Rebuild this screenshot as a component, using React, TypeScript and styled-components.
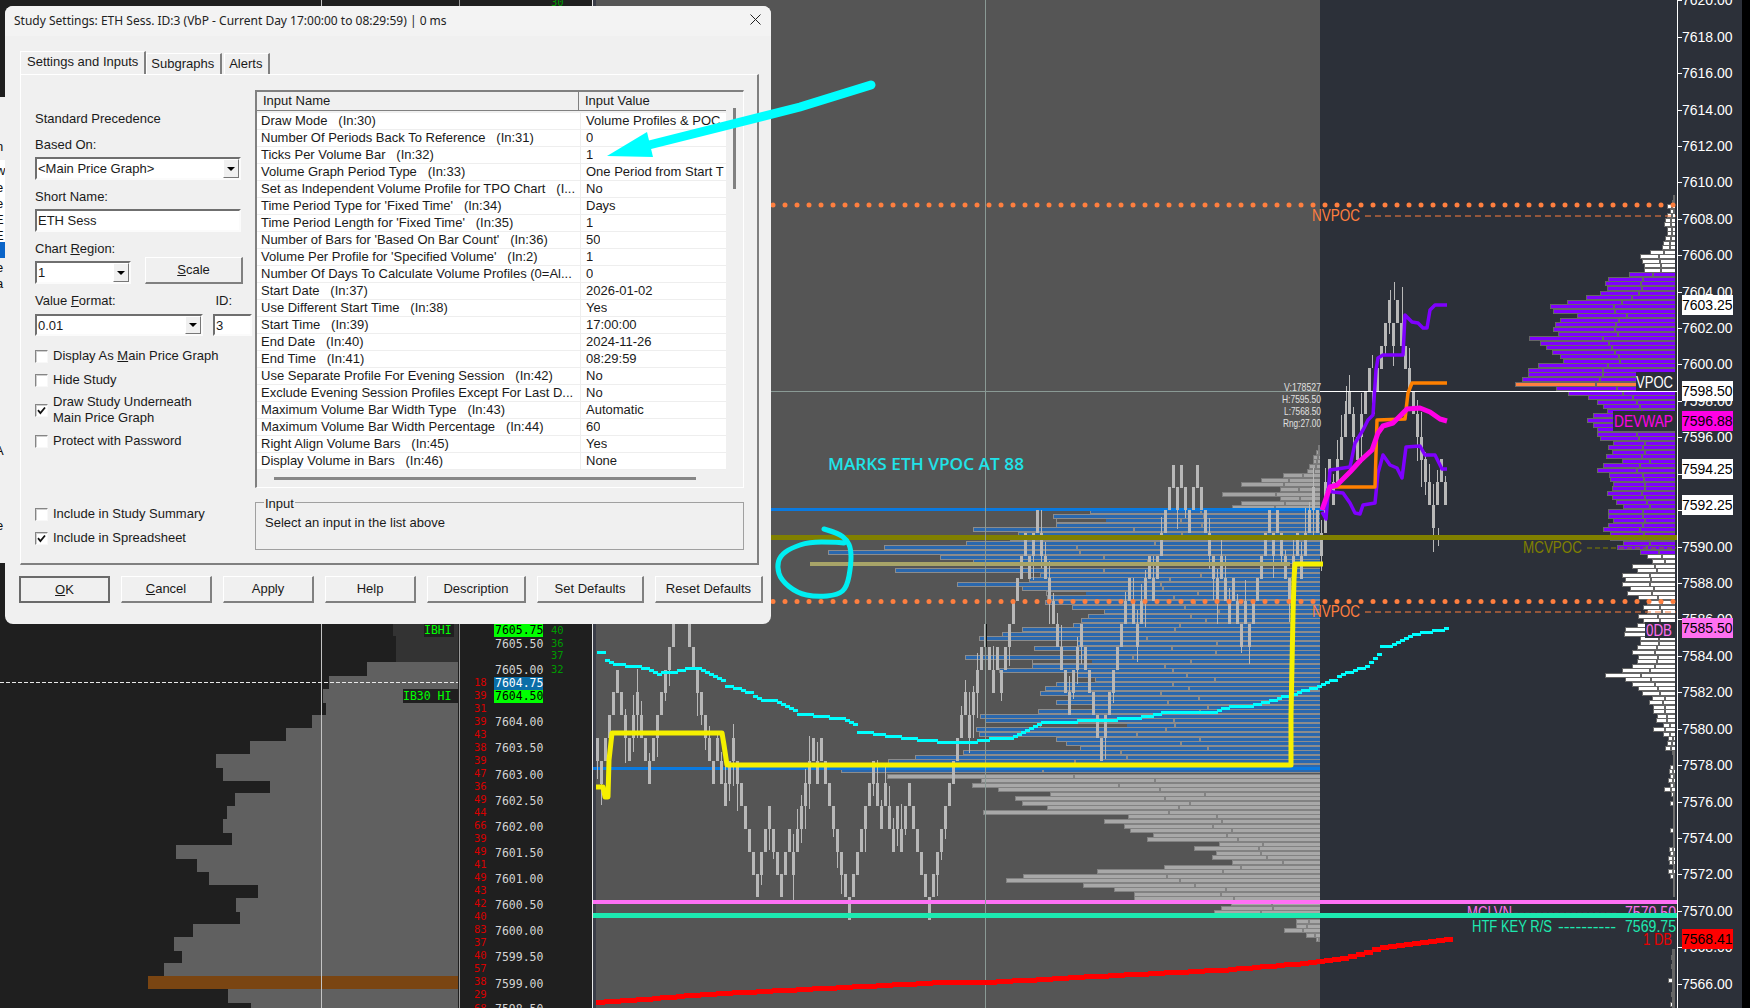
import React from "react";
import styled, { createGlobalStyle } from "styled-components";

const Global = createGlobalStyle`
  html, body { margin: 0; padding: 0; background: #000; overflow: hidden; }
  #root { width: 1750px; height: 1008px; }
`;

const UI = `"Liberation Sans", Arial, sans-serif`;
const MONO = `"DejaVu Sans Mono", "Liberation Mono", monospace`;

/* ---------- page ---------- */
const Page = styled.div`
  position: relative;
  display: flex;
  width: 1750px;
  height: 1008px;
  background: #000;
  overflow: hidden;
`;
const LadderSvg = styled.svg`
  display: block;
  flex: 0 0 592px;
  height: 1008px;
  background: #1f1f1f;
`;
const ChartSvg = styled.svg`
  display: block;
  flex: 0 0 1085px;
  height: 1008px;
  background: #555;
`;
const AxisSvg = styled.svg`
  display: block;
  flex: 0 0 65px;
  height: 1008px;
  background: #2c3039;
`;
const AnnotationLayer = styled.svg`
  position: absolute;
  left: 0;
  top: 0;
  width: 1750px;
  height: 1008px;
  pointer-events: none;
`;

/* ---------- svg text ---------- */
const PriceText = styled.text<{ $color?: string }>`
  font: 11.5px ${MONO};
  fill: ${(p) => p.$color || "#d4d4d4"};
`;
const CountText = styled.text<{ $color: string }>`
  font: 10.5px ${MONO};
  fill: ${(p) => p.$color};
`;
const TagText = styled.text`
  font: 11.5px ${MONO};
  fill: #00ff00;
`;
const AxisText = styled.text<{ $color?: string }>`
  font: 14px ${UI};
  fill: ${(p) => p.$color || "#fff"};
`;
const ChartLabel = styled.text<{ $color: string }>`
  font: 16px ${UI};
  fill: ${(p) => p.$color};
`;
const StatText = styled.text`
  font: 11px ${UI};
  fill: #e0e0e0;
`;
const NoteText = styled.text`
  font: 600 17px "Open Sans", ${UI};
  fill: #1fe3e8;
`;
const SliverText = styled.text`
  font: 13px ${UI};
  fill: #111;
`;

/* ---------- dialog ---------- */
const Dialog = styled.div`
  position: absolute;
  left: 5px;
  top: 6px;
  width: 766px;
  height: 618px;
  background: #f0f0f0;
  border-radius: 8px;
  font: 13px/16px ${UI};
  color: #1a1a1a;
  overflow: hidden;
`;
const TitleBar = styled.div`
  box-sizing: border-box;
  display: flex;
  align-items: center;
  justify-content: space-between;
  height: 30px;
  padding: 0 9px 2px;
  background: #f3f3f3;
`;
const TitleText = styled.div`
  font: 12px "Noto Sans", ${UI};
  color: #222;
  white-space: nowrap;
`;
const DialogBody = styled.div`
  padding: 15px 0 0 15px;
`;
const TabStrip = styled.div`
  display: flex;
  align-items: flex-end;
  height: 23px;
`;
const Tab = styled.div<{ $active?: boolean }>`
  height: ${(p) => (p.$active ? 23 : 21)}px;
  box-sizing: border-box;
  padding: ${(p) => (p.$active ? "2px 6px 0 6px" : "2px 6px 0 4px")};
  margin-right: ${(p) => (p.$active ? 0 : 2)}px;
  border-top: 1px solid #fff;
  border-left: 1px solid #fff;
  border-right: 2px solid #808080;
  background: #f0f0f0;
  white-space: nowrap;
`;
const TabPanel = styled.div`
  display: flex;
  box-sizing: border-box;
  width: 739px;
  height: 491px;
  padding: 15px 0 0 14px;
  border-top: 1px solid #fff;
  border-left: 1px solid #fff;
  border-right: 2px solid #808080;
  border-bottom: 2px solid #808080;
`;
const FormColumn = styled.div`
  flex: 0 0 220px;
  padding-top: 21px;
`;
const FormLabel = styled.div<{ $top: number }>`
  margin-top: ${(p) => p.$top}px;
  height: 16px;
`;
const LabelRow = styled.div`
  display: flex;
  justify-content: space-between;
  width: 197px;
  margin-top: 9px;
  height: 16px;
`;
const FieldRow = styled.div<{ $top: number; $align?: string }>`
  display: flex;
  align-items: ${(p) => p.$align || "stretch"};
  margin-top: ${(p) => p.$top}px;
`;
const Sunken = styled.div<{ $w: number; $h: number; $ml?: number }>`
  box-sizing: border-box;
  display: flex;
  justify-content: space-between;
  width: ${(p) => p.$w}px;
  height: ${(p) => p.$h}px;
  margin-left: ${(p) => p.$ml || 0}px;
  padding-left: 1px;
  line-height: 19px;
  background: #fff;
  border: 2px solid;
  border-color: #6f6f6f #fbfbfb #fbfbfb #6f6f6f;
  overflow: hidden;
  white-space: nowrap;
`;
const ComboButton = styled.div`
  flex: 0 0 16px;
  display: flex;
  align-items: center;
  justify-content: center;
  background: #f0f0f0;
  border: 1px solid;
  border-color: #fff #777 #777 #fff;
  box-sizing: border-box;
  &::after {
    content: "";
    border-left: 4px solid transparent;
    border-right: 4px solid transparent;
    border-top: 4px solid #000;
  }
`;
const RaisedButton = styled.div<{ $w: number; $default?: boolean; $ml?: number }>`
  box-sizing: border-box;
  flex: 0 0 ${(p) => p.$w}px;
  width: ${(p) => p.$w}px;
  height: 27px;
  margin-left: ${(p) => p.$ml || 0}px;
  display: flex;
  align-items: center;
  justify-content: center;
  background: #f0f0f0;
  border-style: solid;
  border-width: 1px 2px 2px 1px;
  border-color: ${(p) => (p.$default ? "#6a6a6a" : "#fff #808080 #808080 #fff")};
  ${(p) => (p.$default ? "border-width: 2px;" : "")}
`;
const CheckRow = styled.div<{ $top: number }>`
  display: flex;
  align-items: center;
  gap: 5px;
  margin-top: ${(p) => p.$top}px;
`;
const CheckBox = styled.div`
  position: relative;
  box-sizing: border-box;
  flex: 0 0 13px;
  width: 13px;
  height: 13px;
  background: #fff;
  border: 1px solid;
  border-color: #858585 #f8f8f8 #f8f8f8 #858585;
  box-shadow: inset 1px 1px 0 #cfcfcf;
`;
const CheckLabel = styled.div`
  white-space: nowrap;
`;
const CheckMark = styled.svg`
  display: block;
  width: 11px;
  height: 11px;
`;
const InputsColumn = styled.div`
  flex: 0 0 489px;
`;
const InputList = styled.div`
  position: relative;
  box-sizing: border-box;
  width: 489px;
  height: 398px;
  border-top: 2px solid #808080;
  border-left: 2px solid #808080;
  border-right: 1px solid #fff;
  border-bottom: 1px solid #fff;
`;
const ListHeader = styled.div`
  display: flex;
  width: 469px;
  height: 18px;
  border-bottom: 1px solid #808080;
  margin-bottom: 2px;
  line-height: 17px;
`;
const HeaderCell = styled.div<{ $w: number; $last?: boolean }>`
  box-sizing: border-box;
  width: ${(p) => p.$w}px;
  padding-left: 6px;
  border-right: ${(p) => (p.$last ? "0" : "1px solid #808080")};
`;
const ListRow = styled.div`
  display: flex;
  width: 469px;
  height: 17px;
  box-sizing: border-box;
  background: #fff;
  border-bottom: 1px solid #eeeeee;
  line-height: 16px;
  white-space: pre;
  overflow: hidden;
`;
const NameCell = styled.div`
  box-sizing: border-box;
  flex: 0 0 324px;
  padding-left: 4px;
  border-right: 1px solid #eeeeee;
  overflow: hidden;
`;
const ValueCell = styled.div`
  padding-left: 5px;
  overflow: hidden;
`;
const VScrollThumb = styled.div`
  position: absolute;
  left: 476px;
  top: 16px;
  width: 3px;
  height: 81px;
  background: #808080;
`;
const HScrollThumb = styled.div`
  position: absolute;
  left: 17px;
  bottom: 7px;
  width: 422px;
  height: 3px;
  background: #868686;
`;
const GroupBox = styled.div`
  position: relative;
  box-sizing: border-box;
  width: 489px;
  height: 48px;
  margin-top: 14px;
  padding: 12px 9px 0;
  border: 1px solid #a0a0a0;
`;
const GroupLegend = styled.div`
  position: absolute;
  left: 8px;
  top: -7px;
  padding: 0 1px;
  background: #f0f0f0;
`;
const ButtonRow = styled.div`
  display: flex;
  gap: 11px;
  margin-top: 11px;
  margin-left: -1px;
`;

/* ---------- close glyph ---------- */
const CloseGlyph = styled.svg`
  display: block;
  width: 11px;
  height: 11px;
  margin: 0 1px 2px 0;
`;

/* ---------- data ---------- */
const ROWS: [string, string][] = [
  ["Draw Mode   (In:30)", "Volume Profiles & POC"],
  ["Number Of Periods Back To Reference   (In:31)", "0"],
  ["Ticks Per Volume Bar   (In:32)", "1"],
  ["Volume Graph Period Type   (In:33)", "One Period from Start T"],
  ["Set as Independent Volume Profile for TPO Chart   (I...", "No"],
  ["Time Period Type for 'Fixed Time'   (In:34)", "Days"],
  ["Time Period Length for 'Fixed Time'   (In:35)", "1"],
  ["Number of Bars for 'Based On Bar Count'   (In:36)", "50"],
  ["Volume Per Profile for 'Specified Volume'   (In:2)", "1"],
  ["Number Of Days To Calculate Volume Profiles (0=Al...", "0"],
  ["Start Date   (In:37)", "2026-01-02"],
  ["Use Different Start Time   (In:38)", "Yes"],
  ["Start Time   (In:39)", "17:00:00"],
  ["End Date   (In:40)", "2024-11-26"],
  ["End Time   (In:41)", "08:29:59"],
  ["Use Separate Profile For Evening Session   (In:42)", "No"],
  ["Exclude Evening Session Profiles Except For Last D...", "No"],
  ["Maximum Volume Bar Width Type   (In:43)", "Automatic"],
  ["Maximum Volume Bar Width Percentage   (In:44)", "60"],
  ["Right Align Volume Bars   (In:45)", "Yes"],
  ["Display Volume in Bars   (In:46)", "None"],
];

const LADDER_BARS: [number, number][] = [
  [662, 367], [676, 329], [689, 323], [702, 326], [715, 312], [728, 286], [741, 250], [754, 216],
  [767, 223], [780, 270], [793, 235], [806, 227], [819, 223], [832, 232], [845, 176], [858, 197],
  [871, 209], [885, 258], [898, 236], [911, 240], [924, 193], [937, 174], [950, 182], [963, 164],
  [989, 228], [1002, 251],
];
const LADDER_PRICES: [string, number, string?, string?][] = [
  ["7605.75", 630, "#00ff00", "#000"], ["7605.50", 644], ["7605.00", 670],
  ["7604.75", 683, "#0a6ea8", "#fff"], ["7604.50", 696, "#00ff00", "#000"],
  ["7604.00", 722], ["7603.50", 748], ["7603.00", 775], ["7602.50", 801], ["7602.00", 827],
  ["7601.50", 853], ["7601.00", 879], ["7600.50", 905], ["7600.00", 931], ["7599.50", 957],
  ["7599.00", 984], ["7598.50", 1009],
];
const LADDER_RED = ["18","39","31","39","43","38","39","47","36","49","44","66","39","49","41","49","43","42","40","83","37","40","57","38","29","68"];
const LADDER_GREEN: [string, number][] = [["30", 2], ["40", 630], ["36", 643], ["37", 655], ["32", 669]];

const BLUE_LEFT = [1090,1053,1056,1056,973,1018,1010,966,884,828,940,973,1290,895,1040,1029,957,1022,1046,1047,1045,1072,1104,1088,1081,1073,1022,1002,979,1077,1034,1081,965,1032,1032,999,1077,1095,1056,1045,1040,1070,1056,1093,1038,980,985,1040,976,979,1056,1066,1080,963,915,888,888,841];
const BLUE_GHOST: Record<number, number> = { 2: 1106, 18: 1086, 33: 1092, 47: 1127 };
const UPPER_GRAY: [number, number][] = [[505,1232],[501,1241],[496,1280],[492,1222],[487,1280],[482,1241],[478,1261],[473,1283],[469,1307],[464,1309],[459,1313],[455,1313],[450,1316],[445,1318]];
const LOWER_GRAY: [number, number][] = [[774,887],[778,981],[783,972],[787,998],[792,1050],[796,1015],[801,1022],[805,1047],[810,983],[814,1128],[819,1104],[824,1124],[828,1130],[833,1153],[837,1147],[842,1219],[846,1194],[851,1216],[855,1212],[860,1232],[865,1164],[869,1097],[874,1023],[878,1006],[883,1083],[887,1114],[892,1134],[896,1134],[901,1231],[906,1221],[910,1214],[919,1296],[924,1296],[928,1284],[933,1306],[937,1316]];

const RIGHT_TOP = [1673,1672,1667,1670,1667,1665,1664,1667,1667,1665,1663,1662,1650,1640,1642,1644,1644,
  1629,1608,1605,1607,1600,1586,1567,1550,1553,1577,1560,1555,1553,1558,1529,1540,1546,1552,1560,1563,1538,1528,1528,1522,1515,1556,1568,1588,1597,1603,1607,1593,1587,1593,1597,1597,1600,1613,1608,1612,1606,1622,1603,1597,1609,1610,1613,1612,1607,1612,1616,1623,1608,1608,1613,1608,1603,1610,1610,1623,1617,1640,
  1647,1652,1632,1637,1622,1625,1622,1630,1627,1638,1647,1643,1647,1638,1643,1637,1625,1624,1640,1640,1637,1632,1638,1637,1632,1622,1605,1625,
  1632,1638,1642,1652,1649,1653,1653,1657,1656,1663,1653,1663,1668,1667,1665,1672];
const RIGHT_LOW: Record<number, number> = {3:1670,4:1669,5:1670,6:1668,7:1670,8:1664,9:1671,11:1670,17:1670,21:1669,22:1670,23:1668,24:1669,26:1668,27:1670};
const RIGHT_TAIL: [number, number][] = [[955,1671],[964,1671],[978,1668],[992,1671],[1002,1670]];

const CANDLES_A = [5,6,5,4,3,2,3,4,5,4,3,4,5,6,5,4,3,2,1,0,-1,-1,-1,0,1,2,3,4,5,6,5,6,7,6,5,6,7,8,9,10,11,10,9,8,9,10,11,10,9,10,9,8,7,6,5,6,5,6,7,8,9,10,11,12,11,10,9,8,7,6,7,8,7,8,9,8,9,8,7,8,9,10,11,12,11,10,9,8,7,6,5,4,3,4,3,2,1,0,1,2,1,
  2,1,0,-1,-2,-3,-4,-3,-4,-5,-4,-3,-2,-1,0,1,2,3,2,1,0,1,2,3,4,5,4,3,2,1,0,-1,-2,-1,0,-1,-2,-3,-2,-3,-4,-5,-6,-7,-6,-7,-6,-5,-6,-7,-6,-5,-4,-3,-2,-3,-2,-1,-2,-1,0,-1,0,-1,-2,-3,-4,-5,-4,-5,-4,-3,-2,-3,-4,-3,-4,-5,-6,-5,-4,-5];
const CANDLES_B = [8,7,8,7,6,5,4,5,6,5,4,3,4,3,2,1,0,1,0,1,2,3,4,5,6,7,8,9,8,7,8];
const TALL_WICKS: [number, number, number][] = [[1394, 282, 300], [1390, 290, 300], [1402, 287, 323], [1372, 355, 368], [1438, 528, 546], [1434, 505, 520], [1346, 386, 415]];

type Pt = [number, number];
const CYAN_A: Pt[] = [[597,652],[604,652],[605,659],[610,663],[623,665],[640,667],[650,670],[657,673],[673,672],[683,669],[698,668],[703,672],[723,680]];
const CYAN_B: Pt[] = [[725,686],[733,687],[750,693],[760,700],[772,700],[790,709],[797,713],[820,716],[843,719],[855,726]];
const CYAN_C: Pt[] = [[857,732],[870,733],[900,737],[917,739],[943,742],[967,742],[987,739],[1010,737],[1023,732],[1037,723],[1070,722],[1090,719],[1115,719],[1149,716],[1157,713],[1215,711],[1229,706],[1252,705],[1288,695],[1320,685],[1333,679],[1337,675],[1360,668],[1370,662],[1378,652]];
const CYAN_D: Pt[] = [[1380,645],[1390,645],[1403,638],[1413,634],[1437,630],[1447,628]];
const RED_PTS: Pt[] = [[596,1002],[640,999],[700,994],[760,991],[820,988],[880,985],[940,982],[980,982],[1020,980],[1060,978],[1090,976],[1150,973],[1230,969],[1300,963],[1320,960],[1345,957],[1360,953],[1380,947],[1420,942],[1447,939]];
const YELLOW = "596,787 603,787 605,797 608,797 609,760 612,733 722,733 724,745 727,765 1291,765 1291,715 1292,665 1293,614 1294,579 1295,564 1323,564";
const MAGENTA = "1322,510 1330,487 1337,485 1350,472 1360,461 1372,450 1378,433 1383,426 1393,423 1407,409 1420,408 1430,412 1440,419 1447,421";
const PURPLE_UP = "1322,512 1326,519 1330,470 1337,469 1350,467 1355,443 1363,430 1368,420 1373,415 1376,370 1378,358 1383,355 1403,355 1405,315 1412,322 1418,323 1423,328 1427,328 1430,310 1435,305 1447,305";
const PURPLE_LOW = "1326,490 1333,492 1343,493 1350,503 1355,513 1360,514 1363,505 1375,503 1378,473 1383,455 1390,465 1397,468 1402,478 1406,447 1420,446 1425,455 1435,455 1442,469 1447,469";
const ORANGE = "1330,487 1375,487 1377,420 1405,419 1408,393 1412,383 1447,383";
const CIRCLE: Pt[] = [[824,529],[838,533],[847,540],[851,549],[851,565],[847,587],[838,595],[816,597],[797,593],[781,580],[777,567],[780,556],[791,548],[809,542],[834,542],[844,543]];

const AXIS_LABELS = Array.from({ length: 28 }, (_, i) => 7620 - i * 2);
const axisY = (p: number) => 36.7 + (7618 - p) * 18.21;
const AXIS_BOXES: [string, number, string][] = [
  ["7603.25", 295, "#fff"], ["7598.50", 381, "#fff"], ["7596.88", 411, "#ff00e6"],
  ["7594.25", 459, "#fff"], ["7592.25", 495, "#fff"], ["7585.50", 618, "#ff70f0"],
  ["7568.41", 929, "#ff0000"],
];

const hash = (i: number) => Math.floor(((i * 2654435761) % 4294967296) / 65536);

/* turns a polyline into the stair-stepped run the platform draws */
function stepRuns(pts: Pt[], stepX: number, stepY: number) {
  const runs: { x: number; y: number; w: number }[] = [];
  for (let x = pts[0][0]; x < pts[pts.length - 1][0]; x += stepX) {
    const j = pts.findIndex((p, k) => k > 0 && x <= p[0]);
    const [a, b] = [pts[j - 1] || pts[0], pts[j] || pts[0]];
    const y = a[1] + ((b[1] - a[1]) * (x - a[0])) / Math.max(b[0] - a[0], 1);
    const q = Math.round(y / stepY) * stepY;
    const last = runs[runs.length - 1];
    if (last && last.y === q) last.w += stepX;
    else runs.push({ x, y: q, w: stepX });
  }
  return runs;
}
/* a curve through hand-drawn points */
function smoothPath(pts: Pt[]) {
  let d = `M${pts[0][0]} ${pts[0][1]}`;
  for (let i = 1; i < pts.length - 1; i++) {
    const mx = (pts[i][0] + pts[i + 1][0]) / 2;
    const my = (pts[i][1] + pts[i + 1][1]) / 2;
    d += ` Q${pts[i][0]} ${pts[i][1]} ${mx} ${my}`;
  }
  const e = pts[pts.length - 1];
  return `${d} L${e[0]} ${e[1]}`;
}

/* ---------- chart pieces ---------- */
function ProfileRow({ y, x0, right, outline, fill, f, ghost }: { y: number; x0: number; right: number; outline: string; fill: string; f: number; ghost?: number }) {
  const top = Math.round(y);
  const w = right - x0;
  const split = Math.round(x0 + w * f);
  return (
    <g>
      <rect x={x0} y={top} width={w} height={5} fill={outline} />
      {w > 3 && <rect x={x0 + 1} y={top + 1} width={Math.max(split - x0 - 1, 0)} height={3} fill={fill} />}
      {w > 3 && <rect x={split + 2} y={top + 1} width={Math.max(right - split - 2, 0)} height={3} fill={fill} />}
      {ghost && <rect x={x0 + 1} y={top + 1} width={ghost - x0 - 1} height={3} fill="#555" />}
    </g>
  );
}
const splitFor = (i: number) => 0.42 + (hash(i + 3) % 16) / 100;

function Candle({ x, top, h, i }: { x: number; top: number; h: number; i: number }) {
  const v = hash(i + 11);
  const up = v % 3 === 0 ? 6 + (v >> 3) % 20 : 0;
  const down = (v >> 5) % 3 === 0 ? 6 + (v >> 7) % 22 : 0;
  return (
    <g fill="#b8b8b8">
      <rect x={x + 1} y={top - up} width={1} height={h + up + down} />
      <rect x={x} y={top} width={3} height={h} />
    </g>
  );
}
const Line = ({ points, color, w }: { points: string; color: string; w: number }) => (
  <polyline points={points} fill="none" stroke={color} strokeWidth={w} strokeLinejoin="round" strokeLinecap="butt" />
);
const StepLine = ({ pts, color, h, sx = 4, sy = 1 }: { pts: Pt[]; color: string; h: number; sx?: number; sy?: number }) => (
  <g fill={color}>
    {stepRuns(pts, sx, sy).map((r) => (
      <rect key={r.x} x={r.x} y={r.y - h / 2} width={r.w + 1} height={h} />
    ))}
  </g>
);

function Ladder() {
  return (
    <LadderSvg viewBox="0 0 592 1008">
      <rect x={393} y={624} width={65} height={12} fill="#333" />
      <rect x={396} y={636} width={62} height={26} fill="#333" />
      {LADDER_BARS.map(([y, x]) => (
        <rect key={y} x={x} y={y} width={458 - x} height={14} fill="#606060" />
      ))}
      <rect x={148} y={976} width={310} height={13} fill="#7a4512" />
      <rect x={321} y={0} width={1} height={1008} fill="#c4c4c4" />
      <rect x={459} y={0} width={1} height={1008} fill="#9a9a9a" />
      <line x1={0} x2={458} y1={682.5} y2={682.5} stroke="#e8e8e8" strokeWidth={1} strokeDasharray="4 2" />
      <rect x={0} y={97} width={5} height={466} fill="#f0f0f0" />
      <rect x={0} y={160} width={5} height={90} fill="#fff" />
      <rect x={0} y={242} width={5} height={16} fill="#0a64c8" />
      <SliverText x={-4} y={151}>n</SliverText>
      <SliverText x={-4} y={175}>w</SliverText>
      <SliverText x={-4} y={192}>e</SliverText>
      <SliverText x={-4} y={208}>e</SliverText>
      <SliverText x={-5} y={224}>E</SliverText>
      <SliverText x={-5} y={240}>E</SliverText>
      <SliverText x={-4} y={272}>e</SliverText>
      <SliverText x={-4} y={288}>a</SliverText>
      <SliverText x={-5} y={455}>A</SliverText>
      <SliverText x={-4} y={530}>e</SliverText>
      <rect x={424} y={623} width={30} height={14} fill="#1f1f1f" />
      <TagText x={424} y={634}>IBHI</TagText>
      <rect x={403} y={689} width={55} height={14} fill="#1f1f1f" />
      <TagText x={403} y={700}>IB30 HI</TagText>
      {LADDER_PRICES.map(([t, y, bg, fg]) => (
        <g key={t}>
          {bg && <rect x={494} y={y - 6} width={49} height={13} fill={bg} />}
          <PriceText x={495} y={y + 4} $color={fg}>{t}</PriceText>
        </g>
      ))}
      {LADDER_RED.map((t, i) => (
        <CountText key={i} x={474} y={686 + i * 13.02} $color="#d80000">{t}</CountText>
      ))}
      {LADDER_GREEN.map(([t, y]) => (
        <CountText key={y} x={551} y={y + 4} $color="#009a00">{t}</CountText>
      ))}
    </LadderSvg>
  );
}

function MainChart() {
  const dots = Array.from({ length: 91 }, (_, i) => 1673 - 12 * i);
  return (
    <ChartSvg viewBox="592 0 1085 1008">
      <rect x={592} y={0} width={1} height={1008} fill="#e8e8e8" />
      <rect x={593} y={0} width={3} height={1008} fill="#3a3d48" />
      <rect x={1320} y={0} width={357} height={1008} fill="#2c3039" />
      <g shapeRendering="crispEdges">
        {UPPER_GRAY.map(([y, x], i) => (
          <ProfileRow key={y} y={y} x0={x} right={1320} outline="#7b7b7b" fill="#a4a4a4" f={splitFor(i)} />
        ))}
        {BLUE_LEFT.map((x, i) =>
          i === 12 ? null : (
            <ProfileRow key={i} y={509 + i * 4.55} x0={x} right={1320} outline="#8c8c8c" fill="#2a68ae" f={splitFor(i + 30)} ghost={BLUE_GHOST[i]} />
          )
        )}
        {LOWER_GRAY.map(([y, x], i) => (
          <ProfileRow key={y} y={y} x0={x} right={1320} outline="#828282" fill="#a8a8a8" f={splitFor(i + 70)} />
        ))}
        {RIGHT_TOP.map((x, i) => {
          const purple = i >= 17 && i <= 78;
          return (
            <ProfileRow key={i} y={195 + i * 4.55} x0={x} right={1675} outline="#666" fill={i === 41 ? "#ff8040" : purple ? "#7f00ff" : "#fff"} f={0.5} />
          );
        })}
        {Array.from({ length: 32 }, (_, i) => (
          <ProfileRow key={i} y={751 + i * 4.55} x0={RIGHT_LOW[i] ?? 1673} right={1675} outline="#6e6e6e" fill="#fff" f={0.5} />
        ))}
        {RIGHT_TAIL.map(([y, x]) => (
          <ProfileRow key={y} y={y} x0={x} right={1675} outline="#666" fill="#fff" f={0.5} />
        ))}
        <rect x={1672} y={949} width={3} height={59} fill="#666" />
        <rect x={771} y={508} width={549} height={3} fill="#0a7ae0" />
        <rect x={593} y={767} width={727} height={3} fill="#0a7ae0" />
        <rect x={1320} y={509} width={4} height={2} fill="#0a7ae0" />
        {CANDLES_A.map((k, i) => (
          <Candle key={i} i={i} x={596 + i * 4} top={Math.round(624 + k * 22.77)} h={23} />
        ))}
        {CANDLES_B.map((m, i) => (
          <Candle key={i} i={i + 300} x={1324 + i * 4} top={Math.round(300 + m * 22.75)} h={23} />
        ))}
        {TALL_WICKS.map(([x, a, b]) => (
          <rect key={x} x={x} y={a} width={1} height={b - a} fill="#b8b8b8" />
        ))}
        <rect x={986} y={624} width={1} height={23} fill="#111" />
        <rect x={810} y={562} width={480} height={4} fill="#a8a468" />
        <rect x={593} y={535} width={1084} height={5} fill="#808000" />
        <rect x={593} y={900} width={1084} height={4} fill="#ff70f5" />
        <rect x={593} y={913} width={1084} height={5} fill="#1de9b0" />
        <rect x={985} y={0} width={1} height={1008} fill="#8a9a95" />
        <rect x={593} y={391} width={727} height={1} fill="#8a9a95" />
        <rect x={1320} y={391} width={357} height={1} fill="#fff" />
      </g>
      {dots.map((x) => (
        <g key={x} fill="#ff7f3f">
          <circle cx={x} cy={205} r={2.5} />
          <circle cx={x} cy={601.5} r={2.5} />
        </g>
      ))}
      <line x1={1365} x2={1676} y1={216} y2={216} stroke="#ff7f3f" strokeWidth={1.2} strokeDasharray="6 4" />
      <line x1={1365} x2={1676} y1={612} y2={612} stroke="#ff7f3f" strokeWidth={1.2} strokeDasharray="6 4" />
      <line x1={1587} x2={1676} y1={548} y2={548} stroke="#808000" strokeWidth={1.2} strokeDasharray="5 3" />
      <g shapeRendering="crispEdges">
        <StepLine pts={RED_PTS} color="#ff0000" h={5} sx={8} sy={1} />
        <StepLine pts={CYAN_A} color="#00ffff" h={3} sx={4} sy={2} />
        <StepLine pts={CYAN_B} color="#00ffff" h={3} sx={4} sy={2} />
        <StepLine pts={CYAN_C} color="#00ffff" h={3} sx={4} sy={2} />
        <StepLine pts={CYAN_D} color="#00ffff" h={3} sx={4} sy={2} />
      </g>
      <Line points={YELLOW} color="#f5f000" w={5} />
      <Line points={PURPLE_UP} color="#7f00ff" w={3.5} />
      <Line points={PURPLE_LOW} color="#7f00ff" w={3.5} />
      <Line points={ORANGE} color="#ff8000" w={3.5} />
      <Line points={MAGENTA} color="#ff00e6" w={5} />
      <ChartLabel x={1312} y={221} $color="#ff7f3f" textLength={48} lengthAdjust="spacingAndGlyphs">NVPOC</ChartLabel>
      <ChartLabel x={1312} y={617} $color="#ff7f3f" textLength={48} lengthAdjust="spacingAndGlyphs">NVPOC</ChartLabel>
      <ChartLabel x={1523} y={553} $color="#808000" textLength={59} lengthAdjust="spacingAndGlyphs">MCVPOC</ChartLabel>
      <rect x={1636} y={372} width={40} height={19} fill="#2c3039" />
      <ChartLabel x={1636} y={388} $color="#fff" textLength={37} lengthAdjust="spacingAndGlyphs">VPOC</ChartLabel>
      <rect x={1613} y={411} width={63} height={20} fill="#2c3039" />
      <ChartLabel x={1614} y={427} $color="#ff00e6" textLength={59} lengthAdjust="spacingAndGlyphs">DEVWAP</ChartLabel>
      <rect x={1645} y={622} width={31} height={16} fill="#2c3039" />
      <ChartLabel x={1646} y={636} $color="#ff70f0" textLength={26} lengthAdjust="spacingAndGlyphs">0DB</ChartLabel>
      <ChartLabel x={1467} y={918} $color="#ff70f0" textLength={45} lengthAdjust="spacingAndGlyphs">MCLVN</ChartLabel>
      <ChartLabel x={1513} y={918} $color="#ff70f0" textLength={104} lengthAdjust="spacingAndGlyphs">------------------</ChartLabel>
      <ChartLabel x={1625} y={918} $color="#ff70f0" textLength={51} lengthAdjust="spacingAndGlyphs">7570.50</ChartLabel>
      <rect x={593} y={913} width={1084} height={5} fill="#1de9b0" />
      <ChartLabel x={1472} y={932} $color="#1de9b0" textLength={80} lengthAdjust="spacingAndGlyphs">HTF KEY R/S</ChartLabel>
      <ChartLabel x={1558} y={932} $color="#1de9b0" textLength={58} lengthAdjust="spacingAndGlyphs">----------</ChartLabel>
      <ChartLabel x={1625} y={932} $color="#1de9b0" textLength={51} lengthAdjust="spacingAndGlyphs">7569.75</ChartLabel>
      <ChartLabel x={1643} y={945} $color="#e80000" textLength={29} lengthAdjust="spacingAndGlyphs">1 DB</ChartLabel>
      <StatText x={1284} y={391} textLength={37} lengthAdjust="spacingAndGlyphs">V:178527</StatText>
      <StatText x={1282} y={403} textLength={39} lengthAdjust="spacingAndGlyphs">H:7595.50</StatText>
      <StatText x={1284} y={415} textLength={37} lengthAdjust="spacingAndGlyphs">L:7568.50</StatText>
      <StatText x={1283} y={427} textLength={38} lengthAdjust="spacingAndGlyphs">Rng:27.00</StatText>
      <NoteText x={828} y={470} textLength={196} lengthAdjust="spacingAndGlyphs">MARKS ETH VPOC AT 88</NoteText>
    </ChartSvg>
  );
}

function PriceAxis() {
  return (
    <AxisSvg viewBox="1677 0 65 1008">
      <rect x={1677} y={0} width={1} height={1008} fill="#fff" />
      {AXIS_LABELS.map((p) => {
        const y = axisY(p);
        return (
          <g key={p}>
            <rect x={1678} y={Math.round(y)} width={4} height={1} fill="#fff" />
            <AxisText x={1682} y={y + 5}>{p.toFixed(2)}</AxisText>
          </g>
        );
      })}
      {AXIS_BOXES.map(([t, y, bg]) => (
        <g key={t}>
          <rect x={1682} y={y} width={51} height={20} fill={bg} />
          <AxisText x={1682} y={y + 15} $color="#000">{t}</AxisText>
        </g>
      ))}
    </AxisSvg>
  );
}

const CheckIcon = () => (
  <CheckMark viewBox="0 0 11 11">
    <path d="M2 5.2 L4.4 8 L9 2.5" fill="none" stroke="#111" strokeWidth="1.8" />
  </CheckMark>
);

function Settings() {
  return (
    <Dialog>
      <TitleBar>
        <TitleText>Study Settings: ETH Sess. ID:3 (VbP - Current Day 17:00:00 to 08:29:59) | 0 ms</TitleText>
        <CloseGlyph viewBox="0 0 11 11">
          <path d="M0.5 0.5 L10.5 10.5 M10.5 0.5 L0.5 10.5" stroke="#222" strokeWidth="1" fill="none" />
        </CloseGlyph>
      </TitleBar>
      <DialogBody>
        <TabStrip>
          <Tab $active>Settings and Inputs</Tab>
          <Tab>Subgraphs</Tab>
          <Tab>Alerts</Tab>
        </TabStrip>
        <TabPanel>
          <FormColumn>
            <FormLabel $top={0}>Standard Precedence</FormLabel>
            <FormLabel $top={10}>Based On:</FormLabel>
            <FieldRow $top={4}>
              <Sunken $w={206} $h={23}>&lt;Main Price Graph&gt;<ComboButton /></Sunken>
            </FieldRow>
            <FormLabel $top={9}>Short Name:</FormLabel>
            <FieldRow $top={4}>
              <Sunken $w={206} $h={23}>ETH Sess</Sunken>
            </FieldRow>
            <FormLabel $top={9}>Chart <u>R</u>egion:</FormLabel>
            <FieldRow $top={0} $align="flex-end">
              <Sunken $w={96} $h={23}>1<ComboButton /></Sunken>
              <RaisedButton $w={98} $ml={14}><span><u>S</u>cale</span></RaisedButton>
            </FieldRow>
            <LabelRow><span>Value <u>F</u>ormat:</span><span>ID:</span></LabelRow>
            <FieldRow $top={5}>
              <Sunken $w={168} $h={22}>0.01<ComboButton /></Sunken>
              <Sunken $w={39} $h={22} $ml={10}>3</Sunken>
            </FieldRow>
            <CheckRow $top={12}><CheckBox /><CheckLabel>Display As <u>M</u>ain Price Graph</CheckLabel></CheckRow>
            <CheckRow $top={8}><CheckBox /><CheckLabel>Hide Study</CheckLabel></CheckRow>
            <CheckRow $top={6}><CheckBox><CheckIcon /></CheckBox><CheckLabel>Draw Study Underneath<br />Main Price Graph</CheckLabel></CheckRow>
            <CheckRow $top={7}><CheckBox /><CheckLabel>Protect with Password</CheckLabel></CheckRow>
            <CheckRow $top={57}><CheckBox /><CheckLabel>Include in Study Summary</CheckLabel></CheckRow>
            <CheckRow $top={8}><CheckBox><CheckIcon /></CheckBox><CheckLabel>Include in Spreadsheet</CheckLabel></CheckRow>
          </FormColumn>
          <InputsColumn>
            <InputList>
              <ListHeader>
                <HeaderCell $w={322}>Input Name</HeaderCell>
                <HeaderCell $w={147} $last>Input Value</HeaderCell>
              </ListHeader>
              {ROWS.map(([n, v]) => (
                <ListRow key={n}>
                  <NameCell>{n}</NameCell>
                  <ValueCell>{v}</ValueCell>
                </ListRow>
              ))}
              <VScrollThumb />
              <HScrollThumb />
            </InputList>
            <GroupBox>
              <GroupLegend>Input</GroupLegend>
              Select an input in the list above
            </GroupBox>
          </InputsColumn>
        </TabPanel>
        <ButtonRow>
          <RaisedButton $w={91} $default><span><u>O</u>K</span></RaisedButton>
          <RaisedButton $w={91}><span><u>C</u>ancel</span></RaisedButton>
          <RaisedButton $w={91}>Apply</RaisedButton>
          <RaisedButton $w={91}>Help</RaisedButton>
          <RaisedButton $w={99}>Description</RaisedButton>
          <RaisedButton $w={107}>Set Defaults</RaisedButton>
          <RaisedButton $w={108}>Reset Defaults</RaisedButton>
        </ButtonRow>
      </DialogBody>
    </Dialog>
  );
}

export default function App() {
  return (
    <Page>
      <Global />
      <Ladder />
      <MainChart />
      <PriceAxis />
      <Settings />
      <AnnotationLayer viewBox="0 0 1750 1008">
        <path d={smoothPath(CIRCLE)} fill="none" stroke="#00eef2" strokeWidth="5" strokeLinecap="round" strokeLinejoin="round" />
        <path d="M645 146 L800 107 L871 85" fill="none" stroke="#00ffff" strokeWidth="9" strokeLinecap="round" />
        <polygon points="607,156 647,132 653,157" fill="#00ffff" />
      </AnnotationLayer>
    </Page>
  );
}
